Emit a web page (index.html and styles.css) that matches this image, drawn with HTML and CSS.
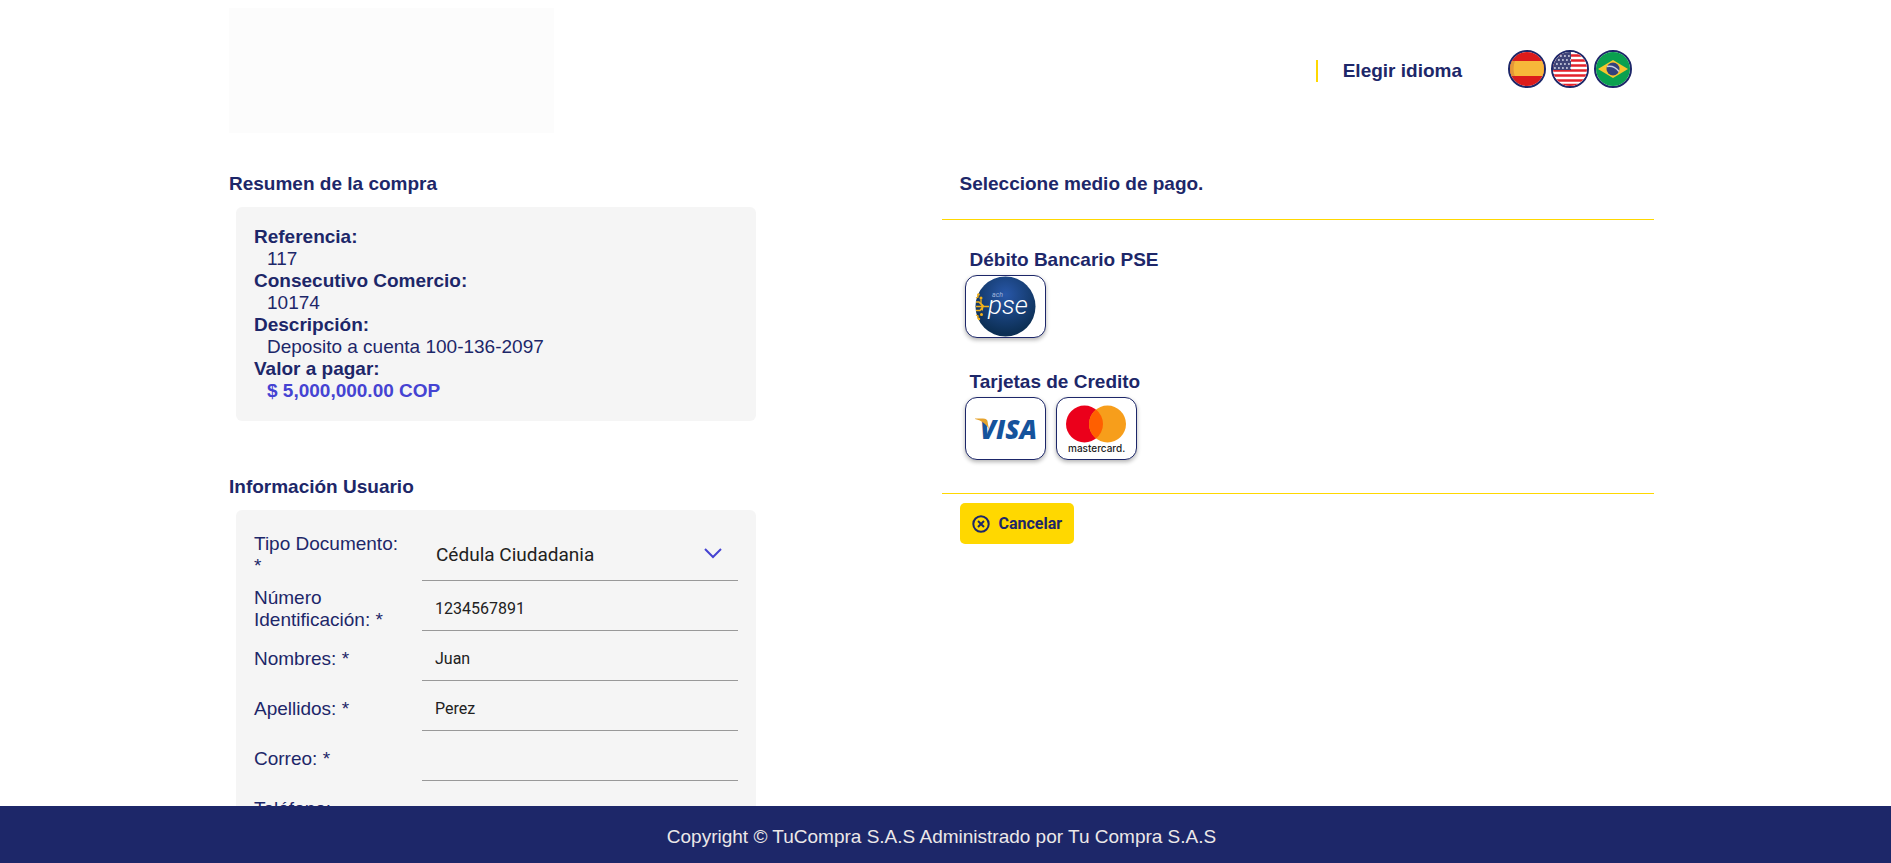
FILE: index.html
```
<!DOCTYPE html>
<html lang="es">
<head>
    <meta charset="UTF-8">
    <meta name="viewport" content="width=device-width, initial-scale=1.0">
    <title>TuCompra</title>
    <link rel="stylesheet" href="styles.css">
</head>
<body>
    <div class="container">
        <header class="header">
            <div class="logo"></div>
            <div class="language">
                <span class="language-title">Elegir idioma</span>
                <div class="flags">
                    <button type="button" class="flag" aria-label="Español">
                        <svg viewBox="0 0 34 34">
                            <rect width="34" height="34" fill="#dc1b1b"/>
                            <rect y="9" width="34" height="15" fill="#f7b83a"/>
                            <path d="M10 2C2 8 1 24 10 32L0 34V0z" fill="#a33" opacity=".25"/>
                        </svg>
                    </button>
                    <button type="button" class="flag" aria-label="English">
                        <svg viewBox="0 0 34 34">
                            <rect width="34" height="34" fill="#fff"/>
                            <path d="M0 3.500h34M0 8.500h34M0 13.500h34M0 18.500h34M0 23.500h34M0 28.500h34M0 33h34" stroke="#e3232c" stroke-width="2.500"/>
                            <rect width="18" height="18" fill="#3f4478"/>
                            <path d="M3 4h15M1 8h17M3 12h15M1 16h17" stroke="#b4b7d0" stroke-width="1.800" stroke-dasharray="1.800 2.200"/>
                        </svg>
                    </button>
                    <button type="button" class="flag" aria-label="Português">
                        <svg viewBox="0 0 34 34">
                            <rect width="34" height="34" fill="#0aa04f"/>
                            <path d="M17 8L32 17L17 26L2 17z" fill="#f7c52d"/>
                            <circle cx="17" cy="17" r="6.500" fill="#33407c"/>
                            <path d="M11 14.500c5-1 9 1 12 5" fill="none" stroke="#c9cde0" stroke-width="1.500"/>
                        </svg>
                    </button>
                </div>
            </div>
        </header>

        <main class="row">
            <div class="col col-info">
                <section>
                    <h2>Resumen de la compra</h2>
                    <dl class="card">
                        <dt>Referencia:</dt>
                        <dd>117</dd>
                        <dt>Consecutivo Comercio:</dt>
                        <dd>10174</dd>
                        <dt>Descripción:</dt>
                        <dd>Deposito a cuenta 100-136-2097</dd>
                        <dt>Valor a pagar:</dt>
                        <dd class="total">$ 5,000,000.00 COP</dd>
                    </dl>
                </section>

                <section>
                    <h2>Información Usuario</h2>
                    <form class="card user-form">
                        <label for="tipoDocumento">Tipo Documento: *</label>
                        <div class="select-box">
                            <select id="tipoDocumento">
                                <option>Cédula Ciudadania</option>
                            </select>
                            <svg class="chevron" viewBox="0 0 18 11"><path d="M1 1l8 8 8-8"/></svg>
                        </div>
                        <label for="identificacion">Número Identificación: *</label>
                        <input type="text" id="identificacion" value="1234567891">
                        <label for="nombres">Nombres: *</label>
                        <input type="text" id="nombres" value="Juan">
                        <label for="apellidos">Apellidos: *</label>
                        <input type="text" id="apellidos" value="Perez">
                        <label for="correo">Correo: *</label>
                        <input type="email" id="correo">
                        <label for="telefono">Teléfono:</label>
                        <input type="tel" id="telefono">
                    </form>
                </section>
            </div>

            <div class="col col-pay">
                <h2>Seleccione medio de pago.</h2>
                <div class="methods">
                    <section>
                        <h3>Débito Bancario PSE</h3>
                        <div class="method-list">
                            <button type="button" class="method" aria-label="PSE">
                                <svg viewBox="0 0 79 61">
                                    <defs>
                                        <radialGradient id="pseBlue" cx=".5" cy=".3" r=".65">
                                            <stop offset="0" stop-color="#2857a8"/>
                                            <stop offset="1" stop-color="#0c2f54"/>
                                        </radialGradient>
                                    </defs>
                                    <circle cx="39.500" cy="30.500" r="30" fill="url(#pseBlue)"/>
                                    <g fill="none" stroke="#f5b21a" stroke-width="1.300">
                                        <path d="M10 30.500h13M10 26h3l4 4.500-3 4h-4M18 30.500l-3-3v-4M12 18v3l-2 1M17 30.500l-1 4M12 43v-3l-2-1"/>
                                    </g>
                                    <g fill="#f5b21a">
                                        <circle cx="12.500" cy="18.500" r="1.200"/>
                                        <circle cx="15" cy="22" r="1.500"/>
                                        <circle cx="15.500" cy="38.500" r="1.500"/>
                                        <circle cx="13" cy="43" r="1.200"/>
                                    </g>
                                    <text class="pse-ach" x="26" y="21">ach</text>
                                    <text class="pse-name" x="22" y="38">pse</text>
                                </svg>
                            </button>
                        </div>
                    </section>
                    <section>
                        <h3>Tarjetas de Credito</h3>
                        <div class="method-list">
                            <button type="button" class="method" aria-label="Visa">
                                <svg viewBox="0 0 79 61">
                                    <text class="visa-name" x="14" y="41">VISA</text>
                                    <path d="M9 20.500h8c3 0 4 1 4.500 3l1.500 8c-2-5-7-9-14-10.500z" fill="#e6a32e"/>
                                </svg>
                            </button>
                            <button type="button" class="method" aria-label="Mastercard">
                                <svg viewBox="0 0 79 61">
                                    <circle cx="27.500" cy="26" r="18.500" fill="#eb001b"/>
                                    <circle cx="50.500" cy="26" r="18.500" fill="#f79e1b"/>
                                    <path d="M39 11.500a18.500 18.500 0 0 1 0 29a18.500 18.500 0 0 1 0-29z" fill="#ff5f00"/>
                                    <text class="mc-name" x="11" y="54">mastercard.</text>
                                </svg>
                            </button>
                        </div>
                    </section>
                </div>
                <button type="button" class="cancel">
                    <svg viewBox="0 0 18 18"><circle cx="9" cy="9" r="7.700"/><path d="M6 6l6 6M12 6l-6 6"/></svg>
                    Cancelar
                </button>
            </div>
        </main>
    </div>

    <footer class="footer">Copyright © TuCompra S.A.S Administrado por Tu Compra S.A.S</footer>
</body>
</html>
```

FILE: styles.css
```
:root {
    --primary-color: #1d2769;
    --accent-color: #ffd800;
    --total-color: #4543d2;
    --card-color: #f5f5f5;
    --line-color: #999;
}

* {
    box-sizing: border-box;
}

body {
    font-family: "Liberation Sans", Arial, sans-serif;
    font-size: 19px;
    line-height: 22px;
    color: var(--primary-color);
    background: #fff;
    margin: 0;
    padding-right: 8px;
}

.container {
    max-width: 1425px;
    margin: 0 auto;
    padding-top: 8px;
}

h2, h3 {
    margin: 0;
    font-size: 19px;
    line-height: 22px;
}

button {
    font: inherit;
    color: inherit;
    cursor: pointer;
}

/* header */
.header {
    display: flex;
    justify-content: space-between;
    align-items: center;
    padding-right: 22px;
    margin-bottom: 40px;
}

.logo {
    width: 325px;
    height: 125px;
    background: #fcfcfc;
}

.language {
    display: flex;
    align-items: center;
    gap: 46px;
}

.language-title {
    border-left: 2px solid var(--accent-color);
    padding-left: 25px;
    font-weight: bold;
}

.flags {
    display: flex;
    gap: 5px;
    padding-bottom: 4px;
}

.flag {
    width: 38px;
    height: 38px;
    padding: 0;
    border: 2px solid var(--primary-color);
    border-radius: 50%;
    overflow: hidden;
    background: none;
}

.flag svg {
    display: block;
    width: 100%;
    height: 100%;
}

/* columns */
.row {
    display: grid;
    grid-template-columns: 1fr 1fr;
    align-items: start;
}

.col-info {
    display: grid;
    gap: 55px;
    width: 75%;
}

.card {
    margin: 12px 7px 0;
    padding: 19px 18px;
    border-radius: 6px;
    background: var(--card-color);
}

dt {
    font-weight: bold;
}

dd {
    margin: 0 0 0 13px;
}

.total {
    font-weight: bold;
    color: var(--total-color);
}

/* user form */
.user-form {
    display: grid;
    grid-template-columns: 168px 1fr;
    row-gap: 5px;
    align-items: center;
}

.user-form label {
    padding-right: 18px;
}

.user-form input,
.user-form select {
    display: block;
    width: 100%;
    height: 45px;
    padding: 0 13px;
    border: none;
    border-bottom: 1px solid var(--line-color);
    border-radius: 0;
    background: transparent;
    font-family: Roboto, sans-serif;
    font-size: 16px;
    color: #212121;
}

.user-form select {
    appearance: none;
    height: 52px;
    padding: 0 14px;
    font-size: 19px;
}

.select-box {
    position: relative;
}

.chevron {
    position: absolute;
    right: 16px;
    top: 19px;
    width: 18px;
    height: 11px;
    fill: none;
    stroke: var(--total-color);
    stroke-width: 2;
    pointer-events: none;
}

/* payment methods */
.col-pay h2 {
    padding-left: 18px;
}

.methods {
    display: grid;
    gap: 33px;
    margin: 24px 0 9px;
    padding: 29px 23px 33px;
    border-top: 1px solid var(--accent-color);
    border-bottom: 1px solid var(--accent-color);
}

.methods h3 {
    padding: 0 5px 4px;
}

.method-list {
    display: flex;
    gap: 10px;
}

.method {
    width: 81px;
    height: 63px;
    padding: 0;
    border: 1px solid var(--primary-color);
    border-radius: 12px;
    background: #fff;
    box-shadow: 0 2px 4px rgba(0, 0, 0, 0.3);
}

.method svg {
    display: block;
    width: 100%;
    height: 100%;
}

.pse-name {
    font: italic 300 26px Roboto, sans-serif;
    fill: #fff;
}

.pse-ach {
    font: italic 400 7px Roboto, sans-serif;
    fill: #9fb4dc;
}

.visa-name {
    font: italic 800 26px "Open Sans", sans-serif;
    fill: #15539c;
}

.mc-name {
    font: 500 10px Inter, sans-serif;
    fill: #222;
}

.cancel {
    display: flex;
    align-items: center;
    gap: 9px;
    height: 41px;
    margin-left: 18px;
    padding: 0 12px;
    border: none;
    border-radius: 5px;
    background: var(--accent-color);
    font-family: Roboto, sans-serif;
    font-size: 16px;
    font-weight: 700;
}

.cancel svg {
    width: 18px;
    height: 18px;
    fill: none;
    stroke: var(--primary-color);
    stroke-width: 2;
}

.footer {
    position: fixed;
    left: 0;
    right: 0;
    bottom: 0;
    padding: 20px 8px 15px 0;
    background: var(--primary-color);
    color: #ece8e8;
    text-align: center;
}
```
